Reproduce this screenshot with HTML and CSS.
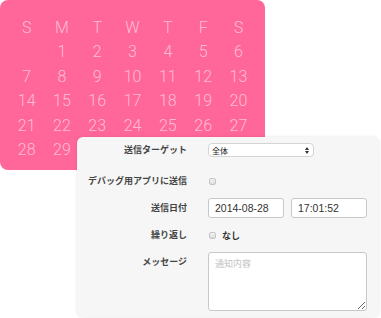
FILE: index.html
```html
<!DOCTYPE html>
<html lang="ja">
<head>
    <meta charset="UTF-8">
    <meta name="viewport" content="width=device-width, initial-scale=1.0">
    <title>通知送信</title>
    <link rel="stylesheet" href="styles.css">
</head>
<body>
    <div class="scene">
        <div class="calendar">
            <span class="day head">S</span>
            <span class="day head">M</span>
            <span class="day head">T</span>
            <span class="day head">W</span>
            <span class="day head">T</span>
            <span class="day head">F</span>
            <span class="day head">S</span>

            <span class="day"></span>
            <span class="day">1</span>
            <span class="day">2</span>
            <span class="day">3</span>
            <span class="day">4</span>
            <span class="day">5</span>
            <span class="day">6</span>

            <span class="day">7</span>
            <span class="day">8</span>
            <span class="day">9</span>
            <span class="day">10</span>
            <span class="day">11</span>
            <span class="day">12</span>
            <span class="day">13</span>

            <span class="day">14</span>
            <span class="day">15</span>
            <span class="day">16</span>
            <span class="day">17</span>
            <span class="day">18</span>
            <span class="day">19</span>
            <span class="day">20</span>

            <span class="day">21</span>
            <span class="day">22</span>
            <span class="day">23</span>
            <span class="day">24</span>
            <span class="day">25</span>
            <span class="day">26</span>
            <span class="day">27</span>

            <span class="day">28</span>
            <span class="day">29</span>
        </div>

        <form class="panel">
            <div class="row">
                <label class="label">送信ターゲット</label>
                <div class="select">
                    <span>全体</span>
                    <svg class="arrows" width="4" height="7" viewBox="0 0 4 7">
                        <path d="M0 3 L2 0 L4 3 Z M0 4 L2 7 L4 4 Z" fill="#333"/>
                    </svg>
                </div>
            </div>

            <div class="row row-debug">
                <label class="label">デバッグ用アプリに送信</label>
                <input class="check" type="checkbox">
            </div>

            <div class="row row-date">
                <label class="label">送信日付</label>
                <div class="fields">
                    <input class="text" type="text" value="2014-08-28">
                    <input class="text" type="text" value="17:01:52">
                </div>
            </div>

            <div class="row">
                <label class="label">繰り返し</label>
                <div class="repeat">
                    <input class="check" type="checkbox">
                    <span class="repeat-text">なし</span>
                </div>
            </div>

            <div class="row row-message">
                <label class="label">メッセージ</label>
                <textarea class="message" placeholder="通知内容"></textarea>
            </div>
        </form>
    </div>
</body>
</html>
```

FILE: styles.css
```css
* {
    margin: 0;
    padding: 0;
    box-sizing: border-box;
}

body {
    background: #fff;
    font-family: 'Liberation Sans', Arial, 'Noto Sans CJK JP', sans-serif;
    color: #333;
}

.scene {
    position: relative;
    width: 381px;
    height: 318px;
}

/* calendar card */
.calendar {
    width: 265px;
    height: 170px;
    background: #ff6699;
    border-radius: 8px;
    padding: 15px 0 0 9px;
    display: grid;
    grid-template-columns: repeat(7, 35.3px);
    grid-auto-rows: 24.5px;
}

.day {
    display: flex;
    align-items: center;
    justify-content: center;
    font-family: 'Helvetica Neue', Roboto, 'Liberation Sans', sans-serif;
    font-weight: 300;
    font-size: 16px;
    color: rgba(255, 255, 255, 0.58);
}

/* form panel lying over the calendar */
.panel {
    position: absolute;
    left: 77px;
    top: 137px;
    width: 302px;
    height: 180px;
    background: #f6f6f6;
    border-radius: 6px;
    box-shadow: 0 0 3px rgba(0, 0, 0, 0.12);
    padding-top: 6px;
}

.row {
    display: grid;
    grid-template-columns: 110px 1fr;
    column-gap: 21px;
    align-items: center;
    min-height: 14px;
}

.row + .row {
    margin-top: 10px;
}

.row + .row-debug {
    margin-top: 17px;
}

.label {
    text-align: right;
    font-family: 'Noto Sans CJK JP', sans-serif;
    font-weight: 700;
    font-size: 9px;
    line-height: 14px;
    color: #444;
}

.select {
    width: 106px;
    height: 14px;
    background: #fff;
    border: 1px solid #d4d4d4;
    border-radius: 4px;
    display: flex;
    align-items: center;
    justify-content: space-between;
    padding: 0 4px 0 3px;
    font-family: 'Noto Sans CJK JP', sans-serif;
    font-size: 8px;
    color: #222;
}

.check {
    appearance: none;
    width: 7px;
    height: 7px;
    margin-left: 1px;
    border: 1px solid #c4c4c4;
    border-radius: 2px;
    background: linear-gradient(#f4f4f4, #dcdcdc);
}

.fields {
    display: flex;
    gap: 7px;
}

.text {
    width: 76px;
    height: 20px;
    background: #fff;
    border: 1px solid #c8c8c8;
    border-radius: 3px;
    padding: 0 6px;
    font-family: 'Liberation Sans', Arial, sans-serif;
    font-size: 10.5px;
    color: #333;
    outline: none;
}

.repeat {
    display: flex;
    align-items: center;
    gap: 6px;
}

.repeat-text {
    font-family: 'Noto Sans CJK JP', sans-serif;
    font-weight: 700;
    font-size: 9px;
    color: #333;
}

.row-message {
    align-items: start;
}

.row-message .label {
    padding-top: 3px;
}

.message {
    width: 159px;
    height: 59px;
    background: #fff;
    border: 1px solid #c8c8c8;
    border-radius: 3px;
    padding: 4px 6px;
    font-family: 'Noto Sans CJK JP', sans-serif;
    font-size: 9px;
    color: #333;
    outline: none;
}

.message::placeholder {
    color: #c4c4c4;
}
```
